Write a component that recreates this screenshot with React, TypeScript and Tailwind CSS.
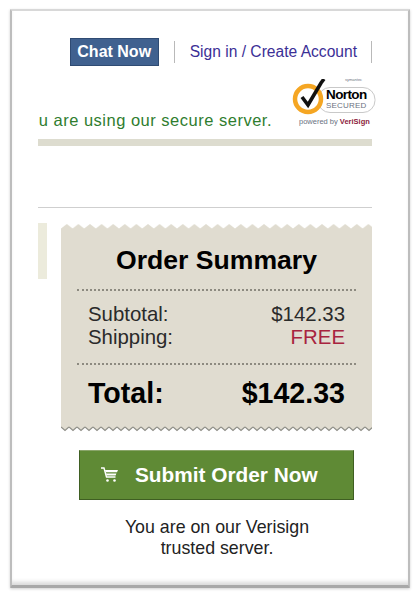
import React from 'react';

const sans = "font-['Liberation_Sans',Arial,sans-serif]";

const NortonBadge: React.FC = () => (
  <div className="relative w-[84px] h-[52px] shrink-0 -mr-[4px] mb-px">
    <span className="absolute left-[53px] top-0 text-[4px] leading-[6px] text-gray-500">symantec</span>
    <svg className="absolute left-0 top-[2px]" width="84" height="36" viewBox="0 0 84 36">
      <rect x="26" y="8.5" width="57" height="25" rx="12" fill="#fff" stroke="#c9c9c9" strokeWidth="1" />
      <circle cx="16" cy="20" r="13" fill="#fff" stroke="#f5a623" strokeWidth="4.5" />
      <path d="M10 18 L16 26 L29 4 L32 0" fill="none" stroke="#111" strokeWidth="3.6" strokeLinejoin="miter" />
    </svg>
    <span className="absolute left-[34px] top-[10px] text-[13.5px] leading-[15px] font-bold tracking-[-0.6px] text-black">Norton</span>
    <span className="absolute left-[34px] top-[24px] text-[8px] leading-[10px] tracking-[0.2px] text-gray-500">SECURED</span>
    <span className="absolute left-[7px] top-[40px] text-[7.5px] leading-[9px] whitespace-nowrap text-gray-500">
      powered by <span className="font-bold text-[#8c1c3c]">VeriSign</span>
    </span>
  </div>
);

const TopTeeth: React.FC = () => (
  <svg className="block w-full" height="5">
    <defs>
      <pattern id="top-teeth" width="11.6" height="5" patternUnits="userSpaceOnUse">
        <path d="M0 5 L0 4.5 L5.8 0 L11.6 4.5 L11.6 5 Z" fill="#e0dcd0" />
      </pattern>
    </defs>
    <rect width="100%" height="5" fill="url(#top-teeth)" />
  </svg>
);

const BottomTeeth: React.FC = () => (
  <svg className="block w-full" height="8">
    <defs>
      <pattern id="bottom-teeth" width="8" height="8" patternUnits="userSpaceOnUse">
        <path d="M0 0 L8 0 L8 3 L4 6.5 L0 3 Z" fill="#e0dcd0" />
        <path d="M0 3 L4 6.5 L8 3" fill="none" stroke="#8f8f88" strokeWidth="1.3" />
      </pattern>
    </defs>
    <rect width="100%" height="8" fill="url(#bottom-teeth)" />
  </svg>
);

const CartIcon: React.FC = () => (
  <svg width="20" height="18" viewBox="0 0 20 18" fill="none">
    <path d="M1 2h3l2.5 9h9" stroke="#fff" strokeWidth="1.4" />
    <path d="M5 4h13l-1 2.2H5.6zM6 7.4h10.4l-.8 2H6.5z" fill="#fff" />
    <circle cx="7.5" cy="14.5" r="1.3" fill="#fff" />
    <circle cx="14.5" cy="14.5" r="1.3" fill="#fff" />
  </svg>
);

const App: React.FC = () => {
  return (
    <div className={`${sans} w-[420px] h-[598px] bg-white pt-[9px] pl-[10px]`}>
      <div className="w-[400px] h-[579px] bg-white border-t-2 border-x-2 border-b-[3px] border-t-[#d8d8d8] border-x-[#bdbdbd] border-b-[#a8a8a8] shadow-[inset_0_-5px_4px_-2px_#d9d9d9,0_1px_3px_#cfcfcf] rounded-[1px] pl-[26px] pr-[36px] pt-[27px]">
        <div className="flex items-center justify-end h-[28px]">
          <div className="w-[89px] h-[28px] flex items-center justify-center bg-[#40618f] border border-[#2f4b73] text-white font-bold text-[16px]">
            Chat Now
          </div>
          <div className="w-px h-[22px] bg-[#b9b9b9] ml-[15px]" />
          <span className="ml-[15px] text-[#3b2f96] text-[15.6px] whitespace-nowrap">Sign in / Create Account</span>
          <div className="w-px h-[22px] bg-[#b9b9b9] ml-[14px]" />
        </div>

        <div className="flex items-end h-[50px] mt-[14px]">
          <div className="flex-1 min-w-0 overflow-hidden flex justify-end">
            <span className="whitespace-nowrap text-[#2f7d2f] text-[16.5px] tracking-[0.5px] leading-[20px] mr-[20px]">
              You are using our secure server.
            </span>
          </div>
          <NortonBadge />
        </div>

        <div className="h-[7px] bg-[#dddccf] mt-[9px]" />
        <div className="h-px bg-[#cfcfcf] mt-[61px]" />

        <div className="flex mt-[15px]">
          <div className="w-[9px] h-[56px] bg-[#ecebdc] shrink-0" />
          <div className="ml-[14px] mt-px flex-1 min-w-0">
            <TopTeeth />
            <div className="bg-[#e0dcd0] h-[195px] pl-[27px] pr-[27px] pt-[16px]">
              <div className="text-center text-[26.6px] leading-[30px] font-bold text-black">Order Summary</div>
              <div className="border-t-2 border-dotted border-[#8d8a80] mt-[14px] -ml-[11px] -mr-[11px]" />
              <div className="flex justify-between text-[20.4px] leading-[23px] text-[#2a2a2a] mt-[12px]">
                <span>Subtotal:</span>
                <span>$142.33</span>
              </div>
              <div className="flex justify-between text-[20.4px] leading-[23px] text-[#2a2a2a]">
                <span>Shipping:</span>
                <span className="text-[#a8243f]">FREE</span>
              </div>
              <div className="border-t-2 border-dotted border-[#8d8a80] mt-[14px] -ml-[11px] -mr-[11px]" />
              <div className="flex justify-between text-[28.6px] leading-[32px] font-bold text-black mt-[12px]">
                <span>Total:</span>
                <span>$142.33</span>
              </div>
            </div>
            <BottomTeeth />
          </div>
        </div>

        <div className="flex justify-center ml-[23px] mt-[18px]">
          <div className="w-[275px] h-[50px] flex items-center bg-[#5f8a35] border border-[#3f5f22] border-t-[#8aa56a] pl-[20px] text-white font-bold text-[20.8px]">
            <CartIcon />
            <span className="ml-[15px]">Submit Order Now</span>
          </div>
        </div>

        <div className="ml-[24px] text-center text-[17.8px] leading-[21px] text-[#222] mt-[17px]">
          You are on our Verisign
          <br />
          trusted server.
        </div>
      </div>
    </div>
  );
};

export default App;
